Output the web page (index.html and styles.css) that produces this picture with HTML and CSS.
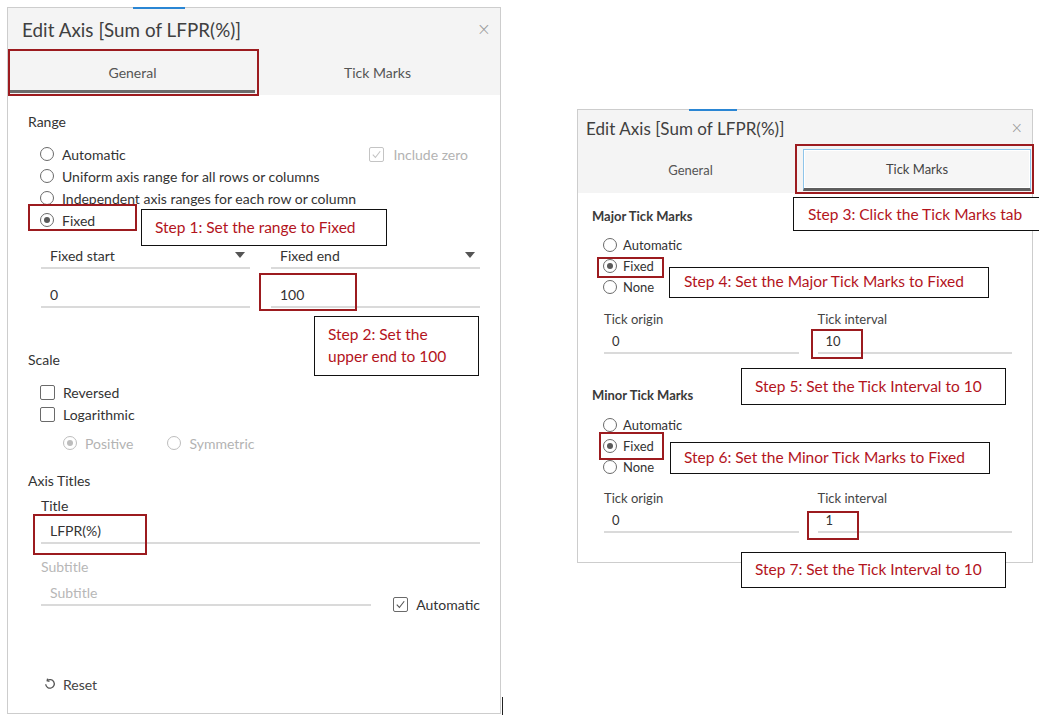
FILE: index.html
```html
<!DOCTYPE html>
<html>
<head>
<meta charset="utf-8">
<link rel="stylesheet" href="styles.css">
</head>
<body>
<div class="stage">

  <!-- LEFT DIALOG -->
  <div class="dialog dlg-left">
    <div class="accent accent-left"></div>
    <div class="head">
      <div class="title-row">
        <span class="title">Edit Axis [Sum of LFPR(%)]</span>
        <span class="close">×</span>
      </div>
      <div class="tabs">
        <div class="tab active">General</div>
        <div class="tab">Tick Marks</div>
      </div>
    </div>
    <div class="body body-left">
      <div class="sec">Range</div>
      <div class="opts">
        <div class="opt">
          <span class="radio"></span><span>Automatic</span>
          <span class="inc">
            <span class="check dis"><svg viewBox="0 0 14 14"><path d="M3 7.2 L5.8 10.2 L11 3.5" /></svg></span>
            <span>Include zero</span>
          </span>
        </div>
        <div class="opt"><span class="radio"></span><span>Uniform axis range for all rows or columns</span></div>
        <div class="opt"><span class="radio"></span><span>Independent axis ranges for each row or column</span></div>
        <div class="opt"><span class="radio on"></span><span>Fixed</span></div>
      </div>
      <div class="fields">
        <div class="field"><span>Fixed start</span><span class="caret"></span></div>
        <div class="field"><span>Fixed end</span><span class="caret"></span></div>
        <div class="field">0</div>
        <div class="field">100</div>
      </div>
      <div class="sec sec-scale">Scale</div>
      <div class="opts">
        <div class="opt"><span class="check"></span><span>Reversed</span></div>
        <div class="opt"><span class="check"></span><span>Logarithmic</span></div>
      </div>
      <div class="opt subopts">
        <span class="radio on dis"></span><span>Positive</span>
        <span class="radio dis sym"></span><span>Symmetric</span>
      </div>
      <div class="sec sec-axis">Axis Titles</div>
      <div class="sublabel">Title</div>
      <div class="field wide">LFPR(%)</div>
      <div class="sublabel dim">Subtitle</div>
      <div class="subrow">
        <div class="field sub dim">Subtitle</div>
        <div class="auto">
          <span class="check"><svg viewBox="0 0 14 14"><path d="M3 7.2 L5.8 10.2 L11 3.5" /></svg></span>
          <span>Automatic</span>
        </div>
      </div>
      <div class="reset">
        <svg class="reset-ic" viewBox="0 0 12 12"><path d="M3.2 2.6 A4.3 4.3 0 1 1 1.7 6.2" /><path d="M3.6 0.6 L3.2 2.8 L5.5 3.3" /></svg>
        <span>Reset</span>
      </div>
    </div>
  </div>

  <!-- RIGHT DIALOG -->
  <div class="dialog dlg-right">
    <div class="accent accent-right"></div>
    <div class="head">
      <div class="title-row r">
        <span class="title">Edit Axis [Sum of LFPR(%)]</span>
        <span class="close">×</span>
      </div>
      <div class="tabs r">
        <div class="tab gen">General</div>
        <div class="tab focus">Tick Marks</div>
      </div>
    </div>
    <div class="body body-right">
      <div class="sec r">Major Tick Marks</div>
      <div class="opts r">
        <div class="opt"><span class="radio"></span><span>Automatic</span></div>
        <div class="opt"><span class="radio on"></span><span>Fixed</span></div>
        <div class="opt"><span class="radio"></span><span>None</span></div>
      </div>
      <div class="tfields">
        <div class="tlabel">Tick origin</div>
        <div class="tlabel">Tick interval</div>
        <div class="tfield">0</div>
        <div class="tfield">10</div>
      </div>
      <div class="sec r sec-minor">Minor Tick Marks</div>
      <div class="opts r minor">
        <div class="opt"><span class="radio"></span><span>Automatic</span></div>
        <div class="opt"><span class="radio on"></span><span>Fixed</span></div>
        <div class="opt"><span class="radio"></span><span>None</span></div>
      </div>
      <div class="tfields minor">
        <div class="tlabel">Tick origin</div>
        <div class="tlabel">Tick interval</div>
        <div class="tfield">0</div>
        <div class="tfield">1</div>
      </div>
    </div>
  </div>

  <!-- highlights -->
  <div class="hl hl-general"></div>
  <div class="hl hl-fixed"></div>
  <div class="hl hl-100"></div>
  <div class="hl hl-lfpr"></div>
  <div class="hl hl-tick"></div>
  <div class="hl hl-major"></div>
  <div class="hl hl-10"></div>
  <div class="hl hl-minor"></div>
  <div class="hl hl-1"></div>

  <!-- callouts -->
  <div class="call c1">Step 1: Set the range to Fixed</div>
  <div class="call c2">Step 2: Set the<br>upper end to 100</div>
  <div class="call c3">Step 3: Click the Tick Marks tab</div>
  <div class="call c4">Step 4: Set the Major Tick Marks to Fixed</div>
  <div class="call c5">Step 5: Set the Tick Interval to 10</div>
  <div class="call c6">Step 6: Set the Minor Tick Marks to Fixed</div>
  <div class="call c7">Step 7: Set the Tick Interval to 10</div>

  <div class="cursor"></div>
</div>
</body>
</html>
```

FILE: styles.css
```css
* { box-sizing: border-box; }
body {
  margin: 0;
  background: #fff;
  font-family: Lato, "Noto Sans", "Liberation Sans", sans-serif;
  color: #333;
}
.stage {
  position: relative;
  width: 1039px;
  height: 719px;
  overflow: hidden;
  background: #fff;
}

/* dialogs */
.dialog {
  position: absolute;
  border: 1px solid #cdcdcd;
  background: #fff;
  display: flex;
  flex-direction: column;
}
.dlg-left { left: 7px; top: 7px; width: 494px; height: 707px; }
.dlg-right { left: 577px; top: 109px; width: 456px; height: 454px; }

.accent { position: absolute; top: -1px; height: 2px; background: #2a86d4; }
.accent-left { left: 125px; width: 52px; }
.accent-right { left: 111px; width: 48px; }

.head { background: #f4f4f4; }
.title-row {
  display: flex;
  align-items: center;
  justify-content: space-between;
  height: 42px;
  padding: 0 9px 0 14px;
}
.title-row .title { font-size: 18.8px; color: #404040; letter-spacing: 0.05px; }
.close { font-size: 17px; color: #9a9a9a; font-family: "DejaVu Sans", sans-serif; font-weight: 300; }
.title-row.r { height: 36px; padding: 0 9px 0 8px; }
.title-row.r .title { font-size: 17px; }
.title-row.r .close { font-size: 15px; }

.tabs { display: flex; height: 45px; }
.tab {
  flex: 1;
  display: flex;
  align-items: center;
  justify-content: center;
  font-size: 14px;
  color: #555;
}
.tab.active {
  border-bottom: 3px solid #6b6b6b;
  margin: 0 0 2px 2px;
  padding-top: 4px;
}
.tabs.r { height: 47px; }
.tabs.r .tab { font-size: 13px; }
.tab.gen { flex: 0 0 225px; padding-left: 0; }
.tab.focus {
  margin: 3px 1px 2px 0;
  border: 1px solid #8fc5ea;
  border-bottom: 3px solid #5e5e5e;
  background: #f6f6f6;
  box-shadow: inset 0 0 0 1px #fff;
  color: #444;
}

/* bodies */
.body { flex: 1; display: flex; flex-direction: column; }
.body-left { padding: 16px 20px 18px 20px; font-size: 14px; }
.body-right { padding: 12px 20px 0 14px; font-size: 13px; }

.sec { height: 22px; line-height: 22px; font-size: 14px; color: #333; }
.sec.r { font-size: 13px; font-weight: 700; color: #3a3a3a; }
.sec-scale { margin-top: 41px; }
.sec-axis { margin-top: 16px; }
.sec-minor { margin-top: 30px; }

.opts { margin-top: 10px; padding-left: 12px; }
.opt {
  display: flex;
  align-items: center;
  gap: 8px;
  height: 22px;
  color: #333;
}
.opts.r { margin-top: 7px; padding-left: 11px; }
.opts.r .opt { height: 21px; gap: 6px; }
.opts.r.minor { margin-top: 8px; }

.radio {
  flex: none;
  width: 14px;
  height: 14px;
  border: 1px solid #6a6a6a;
  border-radius: 50%;
  display: flex;
  align-items: center;
  justify-content: center;
  background: #fff;
}
.radio.on::after {
  content: "";
  width: 6px;
  height: 6px;
  border-radius: 50%;
  background: #5a5a5a;
}
.radio.dis { border-color: #bdbdbd; }
.radio.dis.on::after { background: #bdbdbd; }

.check {
  flex: none;
  width: 15px;
  height: 15px;
  border: 1px solid #6a6a6a;
  border-radius: 2px;
  background: #fff;
  display: flex;
}
.check svg { width: 13px; height: 13px; fill: none; stroke: #555; stroke-width: 1.2; }
.check.dis { border-color: #c4c4c4; }
.check.dis svg { stroke: #c4c4c4; }

.inc {
  margin-left: auto;
  margin-right: 12px;
  display: flex;
  align-items: center;
  gap: 9px;
  color: #b3b3b3;
}

.fields {
  display: grid;
  grid-template-columns: 1fr 1fr;
  column-gap: 21px;
  row-gap: 13px;
  margin-top: 12px;
  padding-left: 13px;
}
.field {
  height: 26px;
  border-bottom: 2px solid #dadada;
  padding: 0 5px 0 9px;
  display: flex;
  align-items: center;
  justify-content: space-between;
  color: #333;
  font-size: 14px;
}
.caret {
  width: 0;
  height: 0;
  border-left: 5px solid transparent;
  border-right: 5px solid transparent;
  border-top: 6px solid #555;
}

.subopts { margin-top: 7px; padding-left: 35px; color: #b3b3b3; }
.subopts .sym { margin-left: 26px; }

.sublabel { height: 22px; line-height: 22px; padding-left: 13px; margin-top: 3px; color: #333; }
.sublabel.dim { margin-top: 12px; color: #b7b7b7; }
.field.wide { margin: 1px 0 0 13px; }
.subrow { display: flex; align-items: flex-end; margin-top: 2px; padding-left: 13px; }
.field.sub { width: 331px; }
.dim { color: #b7b7b7; }
.auto {
  display: flex;
  align-items: center;
  gap: 8px;
  height: 22px;
  margin: 0 0 -9px 22px;
  color: #333;
}

.reset {
  margin-top: auto;
  display: flex;
  align-items: center;
  gap: 7px;
  height: 22px;
  padding-left: 16px;
  color: #444;
}
.reset-ic { width: 12px; height: 12px; fill: none; stroke: #555; stroke-width: 1.3; }

/* tick fields */
.tfields {
  display: grid;
  grid-template-columns: 1fr 1fr;
  column-gap: 19px;
  grid-template-rows: 20px 24px;
  row-gap: 1px;
  margin-top: 12px;
  padding-left: 12px;
}
.tfields.minor { margin-top: 11px; }
.tlabel { line-height: 20px; color: #444; font-size: 13px; }
.tfield {
  border-bottom: 2px solid #dadada;
  padding-left: 8px;
  display: flex;
  align-items: center;
  color: #333;
}

/* highlights */
.hl { position: absolute; border: 2px solid #9c1b1f; }
.hl-general { left: 8px; top: 49px; width: 251px; height: 47px; }
.hl-fixed { left: 28px; top: 204px; width: 109px; height: 27px; }
.hl-100 { left: 259px; top: 273px; width: 98px; height: 38px; }
.hl-lfpr { left: 33px; top: 514px; width: 114px; height: 41px; }
.hl-tick { left: 795px; top: 144px; width: 239px; height: 50px; }
.hl-major { left: 597px; top: 257px; width: 67px; height: 21px; }
.hl-10 { left: 811px; top: 329px; width: 52px; height: 30px; }
.hl-minor { left: 599px; top: 432px; width: 65px; height: 28px; }
.hl-1 { left: 807px; top: 511px; width: 52px; height: 29px; }

/* callouts */
.call {
  position: absolute;
  border: 1px solid #111;
  background: #fff;
  color: #b3141d;
  font-family: Lato, "Liberation Sans", sans-serif;
  font-size: 15.5px;
  padding-left: 13px;
  display: flex;
  align-items: center;
  white-space: nowrap;
}
.c1 { left: 141px; top: 209px; width: 246px; height: 37px; padding-bottom: 2px; }
.c2 { left: 314px; top: 316px; width: 165px; height: 60px; line-height: 22px; align-items: flex-start; padding-top: 6px; }
.c3 { left: 793px; top: 197px; width: 260px; height: 34px; padding-left: 14px; padding-bottom: 1px; }
.c4 { left: 669px; top: 267px; width: 320px; height: 31px; padding-left: 14px; padding-bottom: 3px; }
.c5 { left: 741px; top: 368px; width: 265px; height: 37px; padding-bottom: 2px; }
.c6 { left: 670px; top: 442px; width: 320px; height: 32px; padding-bottom: 3px; }
.c7 { left: 741px; top: 552px; width: 265px; height: 36px; padding-bottom: 3px; }

.cursor { position: absolute; left: 502px; top: 697px; width: 1px; height: 18px; background: #222; }
```
